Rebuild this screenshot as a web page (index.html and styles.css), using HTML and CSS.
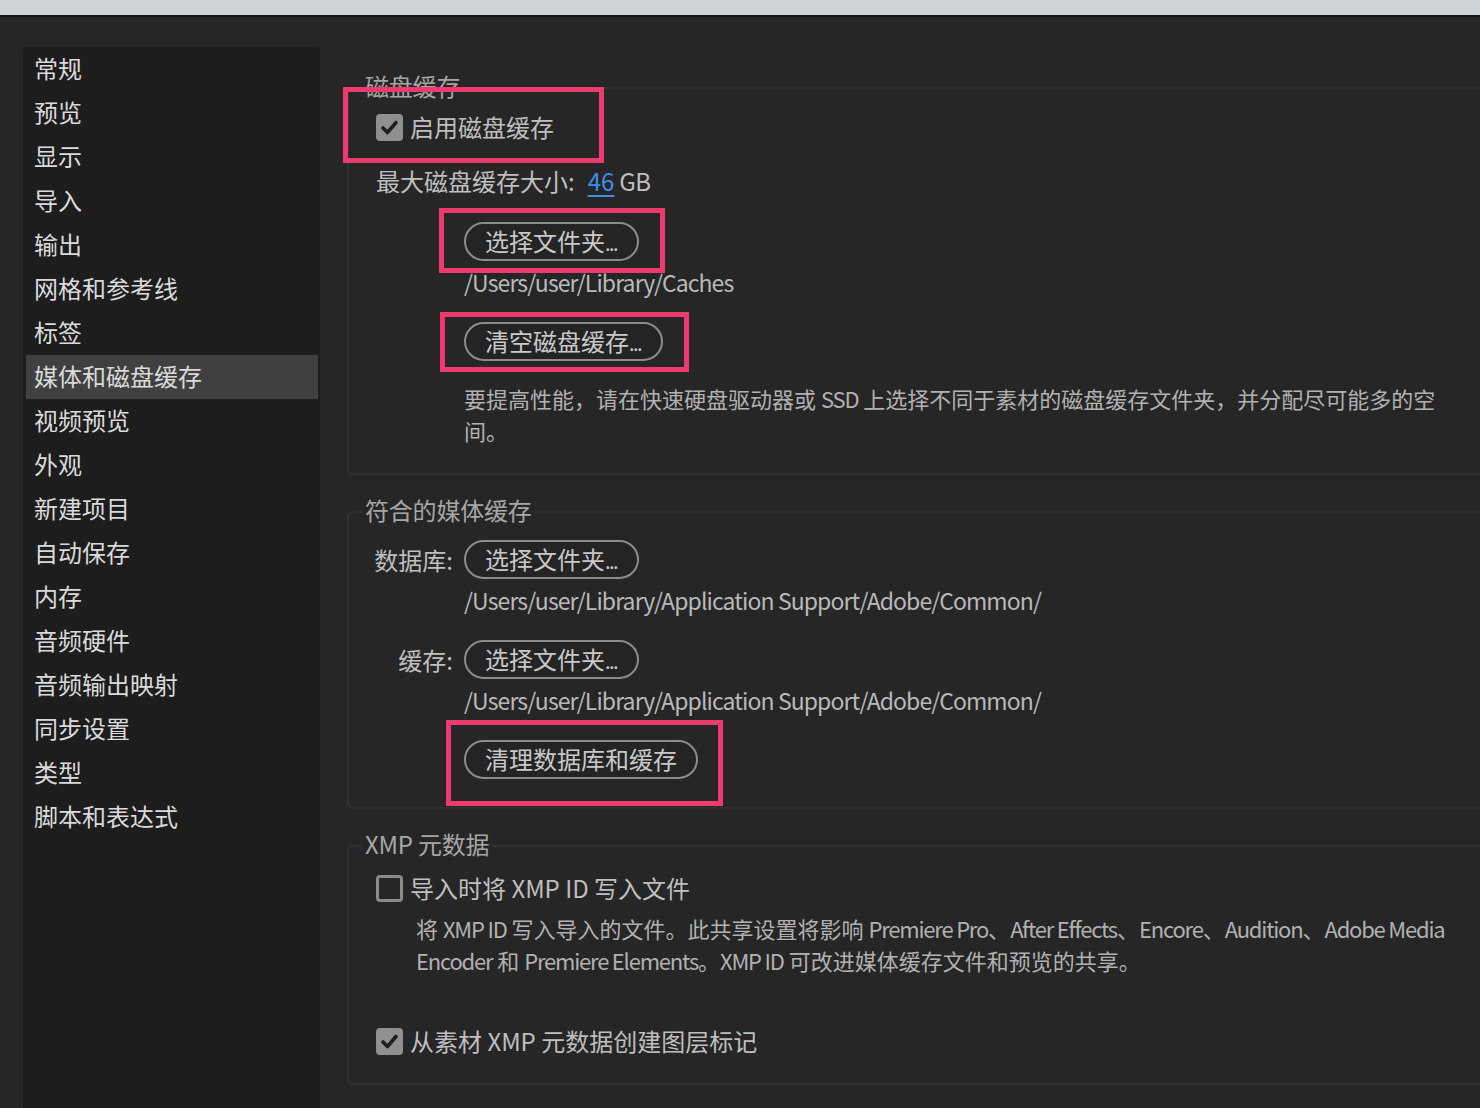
FILE: index.html
```html
<!DOCTYPE html>
<html lang="zh-CN">
<head>
<meta charset="utf-8">
<title>首选项 - 媒体和磁盘缓存</title>
<link rel="stylesheet" href="styles.css">
</head>
<body>
<div class="titlebar"></div>
<div class="window">
  <nav class="sidebar">
    <div class="nav-item">常规</div>
    <div class="nav-item">预览</div>
    <div class="nav-item">显示</div>
    <div class="nav-item">导入</div>
    <div class="nav-item">输出</div>
    <div class="nav-item">网格和参考线</div>
    <div class="nav-item">标签</div>
    <div class="nav-item selected">媒体和磁盘缓存</div>
    <div class="nav-item">视频预览</div>
    <div class="nav-item">外观</div>
    <div class="nav-item">新建项目</div>
    <div class="nav-item">自动保存</div>
    <div class="nav-item">内存</div>
    <div class="nav-item">音频硬件</div>
    <div class="nav-item">音频输出映射</div>
    <div class="nav-item">同步设置</div>
    <div class="nav-item">类型</div>
    <div class="nav-item">脚本和表达式</div>
  </nav>
  <main class="main">
    <fieldset class="group g-disk">
      <legend>磁盘缓存</legend>
      <div class="group-body">
        <div class="check-row h50">
          <span class="cb checked"><svg viewBox="0 0 27 27" width="27" height="27"><path d="M7 14 L11.5 18.5 L20 8.5" fill="none" stroke="#1f1f1f" stroke-width="3.6" stroke-linecap="round" stroke-linejoin="round"/></svg></span>
          <span class="label">启用磁盘缓存</span>
        </div>
        <div class="row h58">
          <span class="label">最大磁盘缓存大小:</span>
          <span class="value">46</span>
          <span class="label unit">GB</span>
        </div>
        <div class="indent mt12"><button class="pill">选择文件夹<span class="dots">...</span></button></div>
        <div class="path indent mt5">/Users/user/Library/Caches</div>
        <div class="indent mt24"><button class="pill">清空磁盘缓存<span class="dots">...</span></button></div>
        <p class="desc indent mt21">要提高性能，请在快速硬盘驱动器或 <span class="lat">SSD</span> 上选择不同于素材的磁盘缓存文件夹，并分配尽可能多的空<br>间。</p>
      </div>
    </fieldset>

    <fieldset class="group g-media">
      <legend>符合的媒体缓存</legend>
      <div class="group-body">
        <div class="field-row mt14">
          <span class="field-label">数据库:</span>
          <button class="pill">选择文件夹<span class="dots">...</span></button>
        </div>
        <div class="path indent mt5">/Users/user/Library/Application Support/Adobe/Common/</div>
        <div class="field-row mt24">
          <span class="field-label">缓存:</span>
          <button class="pill">选择文件夹<span class="dots">...</span></button>
        </div>
        <div class="path indent mt5">/Users/user/Library/Application Support/Adobe/Common/</div>
        <div class="indent mt24"><button class="pill">清理数据库和缓存</button></div>
      </div>
    </fieldset>

    <fieldset class="group g-xmp">
      <legend>XMP 元数据</legend>
      <div class="group-body">
        <div class="check-row h48">
          <span class="cb"></span>
          <span class="label">导入时将 XMP ID 写入文件</span>
        </div>
        <p class="desc sub">将 <span class="lat">XMP ID</span> 写入导入的文件。此共享设置将影响 <span class="lat">Premiere Pro</span>、<span class="lat">After Effects</span>、<span class="lat">Encore</span>、<span class="lat">Audition</span>、<span class="lat">Adobe Media</span><br><span class="lat">Encoder</span> 和 <span class="lat">Premiere Elements</span>。<span class="lat">XMP ID</span> 可改进媒体缓存文件和预览的共享。</p>
        <div class="check-row h54 mt38">
          <span class="cb checked"><svg viewBox="0 0 27 27" width="27" height="27"><path d="M7 14 L11.5 18.5 L20 8.5" fill="none" stroke="#1f1f1f" stroke-width="3.6" stroke-linecap="round" stroke-linejoin="round"/></svg></span>
          <span class="label">从素材 XMP 元数据创建图层标记</span>
        </div>
      </div>
    </fieldset>
  </main>
</div>

<div class="mark m1"></div>
<div class="mark m2"></div>
<div class="mark m3"></div>
<div class="mark m4"></div>
</body>
</html>
```

FILE: styles.css
```css
* { box-sizing: border-box; }

html, body {
  margin: 0;
  padding: 0;
  height: 100%;
}

body {
  background: #262626;
  overflow: hidden;
  font-family: "Noto Sans CJK SC", "Noto Sans", sans-serif;
  color: #bdbdbd;
  position: relative;
}

.titlebar {
  height: 17px;
  background: #cfd2d5;
  border-bottom: 2px solid #141414;
}

.window {
  display: flex;
  height: calc(100% - 17px);
  padding: 30px 0 0 23px;
}

.sidebar {
  width: 297px;
  flex: none;
  background: #1d1d1d;
  border-radius: 4px 4px 0 0;
  padding: 0 2px 0 3px;
}

.nav-item {
  height: 44px;
  line-height: 42px;
  padding: 0 0 2px 8px;
  font-size: 24px;
  color: #dadada;
  white-space: nowrap;
}

.nav-item.selected {
  background: #404040;
}

.main {
  flex: 1;
  min-width: 0;
  padding: 27px 0 0 27px;
  margin-right: -60px;
}

.group {
  margin: 0;
  padding: 0;
  border: 2px solid #313131;
  border-radius: 6px;
  min-width: 0;
}

.group + .group {
  margin-top: 23px;
}

.group legend {
  margin-left: 13px;
  padding: 0 3px 4px;
  font-size: 24px;
  line-height: 24px;
  color: #a6a6a6;
  letter-spacing: -0.2px;
}

.group-body {
  padding-left: 27px;
}

.g-disk .group-body { padding-bottom: 27px; }
.g-media .group-body { padding-bottom: 28px; }
.g-xmp .group-body { padding-top: 4px; padding-bottom: 15px; }

.check-row, .row {
  display: flex;
  align-items: center;
}

.h48 { height: 48px; }
.h50 { height: 50px; }
.h54 { height: 54px; }
.h58 { height: 58px; }

.mt5 { margin-top: 5px; }
.mt12 { margin-top: 12px; }
.mt14 { margin-top: 14px; }
.mt21 { margin-top: 21px; }
.mt24 { margin-top: 24px; }
.mt38 { margin-top: 38px; }

.label {
  font-size: 24px;
  line-height: 32px;
  color: #bfbfbf;
  white-space: nowrap;
}

.cb {
  width: 27px;
  height: 27px;
  flex: none;
  border-radius: 4px;
  border: 3px solid #8a8a8a;
  margin-right: 7px;
  display: flex;
  align-items: center;
  justify-content: center;
}

.cb.checked {
  background: #8f8f8f;
  border: none;
}

.value {
  margin-left: 13px;
  font-size: 24px;
  line-height: 32px;
  color: #3b90e8;
  text-decoration: underline;
  text-decoration-thickness: 2px;
  text-underline-offset: 4px;
}

.unit {
  margin-left: 5px;
  letter-spacing: -0.5px;
}

.indent {
  margin-left: 88px;
}

.pill {
  height: 39px;
  padding: 0 19px 2px;
  border: 2px solid #8c8c8c;
  border-radius: 20px;
  background: #242424;
  color: #c9c9c9;
  font-family: "Noto Sans CJK SC", "Noto Sans", sans-serif;
  font-size: 24px;
  line-height: 33px;
  white-space: nowrap;
}

.dots {
  font-size: 20px;
  letter-spacing: -1.5px;
  margin-right: 1px;
}

.path {
  font-size: 23px;
  line-height: 32px;
  letter-spacing: -0.9px;
  color: #b9b9b9;
  white-space: nowrap;
}

.desc {
  margin-bottom: 0;
  font-size: 22px;
  line-height: 32px;
  color: #b1b1b1;
  white-space: nowrap;
}

.lat {
  letter-spacing: -1.2px;
}

.desc.sub {
  margin: 0 0 0 40px;
}

.field-row {
  display: flex;
  align-items: center;
}

.field-label {
  width: 104px;
  margin-left: -16px;
  padding-right: 11px;
  text-align: right;
  font-size: 24px;
  line-height: 32px;
  color: #bfbfbf;
  white-space: nowrap;
}

.mark {
  position: absolute;
  border: 5px solid #ef3a71;
  z-index: 5;
}

.m1 { left: 343px; top: 87px; width: 261px; height: 76px; }
.m2 { left: 439px; top: 208px; width: 226px; height: 65px; }
.m3 { left: 440px; top: 312px; width: 249px; height: 60px; }
.m4 { left: 446px; top: 720px; width: 277px; height: 86px; }
```
